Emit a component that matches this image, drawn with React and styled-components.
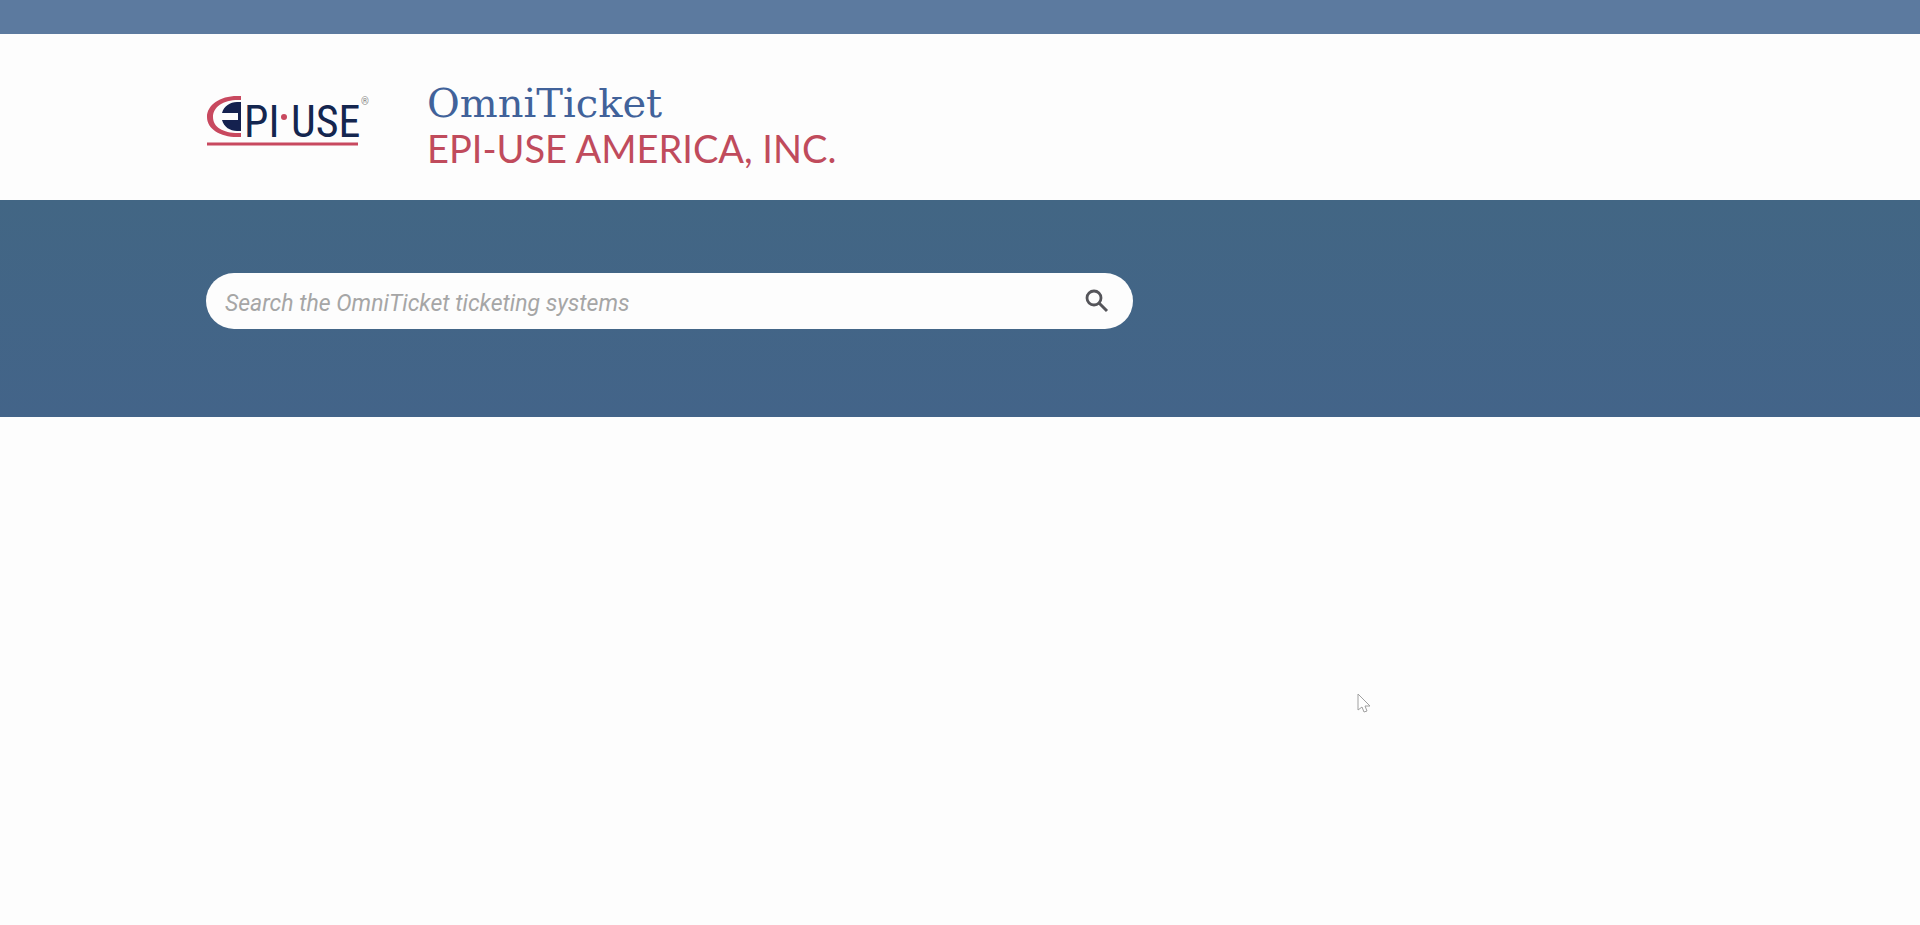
import styled, { createGlobalStyle } from "styled-components";

const GlobalStyle = createGlobalStyle`
  * {
    box-sizing: border-box;
  }

  body {
    margin: 0;
    background: #fdfdfd;
    font-family: Roboto, "Liberation Sans", sans-serif;
  }
`;

const TopBar = styled.div`
  height: 34px;
  background: #5c7a9f;
`;

const Container = styled.div`
  max-width: 1556px;
  margin: 0 auto;
  padding: 0 24px;
`;

const Header = styled.header`
  padding: 47px 0 29px;
`;

const Brand = styled(Container)`
  display: flex;
  align-items: flex-start;
  gap: 52px;
`;

const Logo = styled.svg`
  flex: none;
  margin-top: 12px;
`;

const Title = styled.h1`
  margin: 0;
  font-family: "DejaVu Serif", serif;
  font-size: 40px;
  font-weight: 400;
  line-height: 44px;
  color: #41629a;
`;

const Company = styled.p`
  margin: 0;
  font-family: Lato, sans-serif;
  font-size: 38px;
  font-weight: 400;
  line-height: 46px;
  color: #c04b5c;
`;

const SearchBand = styled.section`
  padding: 73px 0 88px;
  background: linear-gradient(#426684, #436489);
`;

const SearchForm = styled.form`
  display: flex;
  align-items: center;
  max-width: 927px;
  height: 56px;
  padding: 0 24px 0 19px;
  border-radius: 28px;
  background: #fdfdfd;
`;

const SearchInput = styled.input`
  flex: 1;
  min-width: 0;
  padding: 4px 0 0;
  border: none;
  outline: none;
  background: none;
  font-family: Roboto, sans-serif;
  font-size: 23px;
  font-weight: 400;
  font-style: italic;
  color: #505050;

  &::placeholder {
    color: #a6a6a6;
    opacity: 1;
  }
`;

const SearchButton = styled.button`
  display: flex;
  padding: 0;
  border: none;
  background: none;
  color: #55555a;
  cursor: pointer;
`;

const Pointer = styled.svg`
  position: absolute;
  top: 693px;
  left: 1357px;
`;

const BrandLogo = () => (
  <Logo width="169" height="56" viewBox="0 0 169 56" role="img">
    <path
      d="M35 3H31C14 3 1 12 1 24S14 44 31 44H35V40H32C17 40 7 34 7 24S17 7 32 7H35Z"
      fill="#c8495f"
    />
    <path
      d="M35 9H31C24 9 18 13 16 20H32V27H16C18 34 24 38 31 38H35Z"
      fill="#14214f"
    />
    <g
      fill="#14264f"
      fontFamily="Roboto Condensed, Liberation Sans Narrow, Roboto, sans-serif"
      fontSize="44"
    >
      <text x="38" y="44">
        PI
      </text>
      <text x="85" y="44">
        USE
      </text>
    </g>
    <circle cx="78" cy="24" r="3" fill="#c8495f" />
    <path d="M1 51H152" stroke="#c8495f" strokeWidth="3" />
    <text x="155" y="12" fontSize="10" fill="#888">
      ®
    </text>
  </Logo>
);

const SearchIcon = () => (
  <svg width="24" height="24" viewBox="0 0 24 24" fill="none">
    <circle cx="9" cy="9" r="7" stroke="currentColor" strokeWidth="2.8" />
    <path d="M14 14L22 22" stroke="currentColor" strokeWidth="3" />
  </svg>
);

const App = () => {
  return (
    <>
      <GlobalStyle />
      <TopBar />
      <Header>
        <Brand>
          <BrandLogo />
          <div>
            <Title>OmniTicket</Title>
            <Company>EPI-USE AMERICA, INC.</Company>
          </div>
        </Brand>
      </Header>
      <SearchBand>
        <Container>
          <SearchForm role="search" onSubmit={(e) => e.preventDefault()}>
            <SearchInput
              type="text"
              aria-label="Search the OmniTicket ticketing systems"
              placeholder="Search the OmniTicket ticketing systems"
            />
            <SearchButton type="submit" aria-label="Search">
              <SearchIcon />
            </SearchButton>
          </SearchForm>
        </Container>
      </SearchBand>
      <Pointer width="15" height="21" viewBox="0 0 15 21" aria-hidden="true">
        <path
          d="M1 1V17L5 14L7 19L10 18L8 13H13Z"
          fill="#fff"
          stroke="#a0a0a0"
        />
      </Pointer>
    </>
  );
};

export default App;
